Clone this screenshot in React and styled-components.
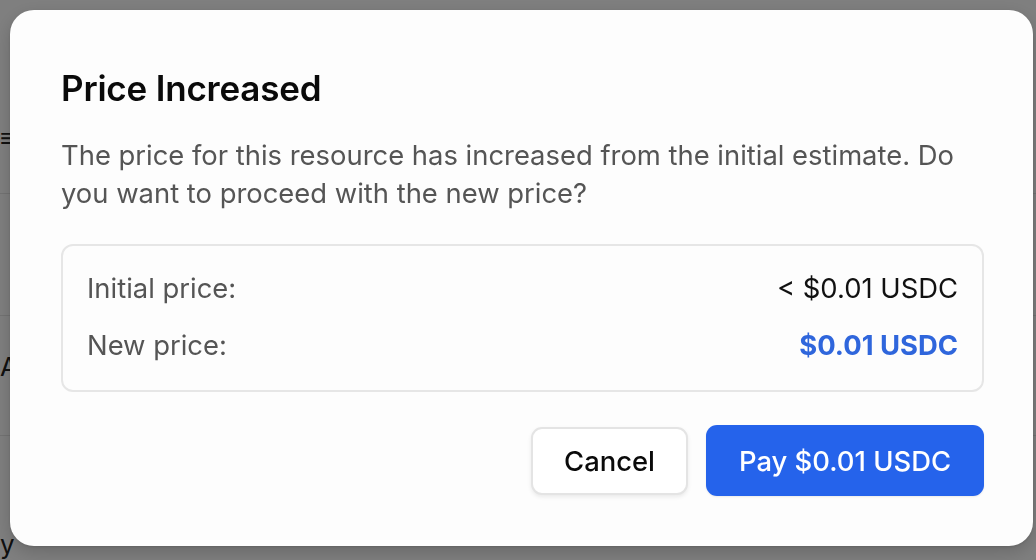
import React from "react";
import styled, { createGlobalStyle } from "styled-components";

const GlobalStyle = createGlobalStyle`
  html, body {
    margin: 0;
    padding: 0;
    background: #ffffff;
  }
  body {
    font-family: Inter, "Noto Sans", "Liberation Sans", sans-serif;
    -webkit-font-smoothing: antialiased;
  }
`;

const Page = styled.div`
  display: flex;
  flex-direction: column;
  height: 560px;
  overflow: hidden;
`;

const PageRow = styled.div`
  height: ${(props) => props.height}px;
  border-bottom: ${(props) => (props.last ? "none" : "1px solid #e6e6e6")};
  display: flex;
  align-items: flex-end;
  padding-bottom: ${(props) => props.pad || 0}px;
  font-size: 26px;
  line-height: 30px;
  color: #222;
  box-sizing: border-box;
`;

const Backdrop = styled.div`
  position: fixed;
  inset: 0;
  background: rgba(0, 0, 0, 0.5);
  padding: 10px 3px 0 10px;
  box-sizing: border-box;
`;

const Dialog = styled.div`
  background: #fdfdfd;
  border-radius: 24px;
  box-shadow: 0 6px 18px rgba(0, 0, 0, 0.18), 0 1px 3px rgba(0, 0, 0, 0.12);
  padding: 57px 49px 50px 51px;
  box-sizing: border-box;
  display: flex;
  flex-direction: column;
`;

const Title = styled.h2`
  margin: 0;
  font-size: 35px;
  line-height: 43px;
  font-weight: 600;
  color: #0a0a0a;
  letter-spacing: -0.2px;
`;

const Description = styled.p`
  margin: 26px 0 0;
  font-size: 27.4px;
  line-height: 38px;
  color: #555555;
`;

const PriceBox = styled.div`
  margin-top: 32px;
  border: 2px solid #e6e6e6;
  border-radius: 12px;
  padding: 23px 24px 25px 24px;
  display: flex;
  flex-direction: column;
  gap: 18px;
`;

const PriceRow = styled.div`
  display: flex;
  justify-content: space-between;
  align-items: center;
  font-size: 27.4px;
  line-height: 39px;
`;

const Label = styled.span`
  color: #555555;
`;

const Value = styled.span`
  color: ${(props) => (props.highlight ? "#2f66dc" : "#111111")};
  font-weight: ${(props) => (props.highlight ? 700 : 400)};
`;

const Actions = styled.div`
  margin-top: 33px;
  display: flex;
  justify-content: flex-end;
  align-items: center;
  gap: 18px;
`;

const Button = styled.button`
  font-family: inherit;
  font-size: 27.4px;
  font-weight: 500;
  height: ${(props) => (props.primary ? 71 : 68)}px;
  padding: 0 ${(props) => (props.primary ? 33 : 31)}px;
  border-radius: 11px;
  cursor: pointer;
  border: ${(props) => (props.primary ? "none" : "2px solid #e4e4e4")};
  background: ${(props) => (props.primary ? "#2563eb" : "#ffffff")};
  color: ${(props) => (props.primary ? "#ffffff" : "#0a0a0a")};
  box-shadow: ${(props) =>
    props.primary ? "0 1px 2px rgba(0,0,0,0.08)" : "0 2px 4px rgba(0,0,0,0.08)"};
`;

export default function App() {
  return (
    <>
      <GlobalStyle />
      <Page>
        <PageRow height={194} pad={40}>≡</PageRow>
        <PageRow height={122} />
        <PageRow height={120} pad={53}>AI</PageRow>
        <PageRow height={124} last>y</PageRow>
      </Page>
      <Backdrop>
        <Dialog role="dialog" aria-modal="true">
          <Title>Price Increased</Title>
          <Description>
            The price for this resource has increased from the initial estimate.
            Do you want to proceed with the new price?
          </Description>
          <PriceBox>
            <PriceRow>
              <Label>Initial price:</Label>
              <Value>&lt; $0.01 USDC</Value>
            </PriceRow>
            <PriceRow>
              <Label>New price:</Label>
              <Value highlight>$0.01 USDC</Value>
            </PriceRow>
          </PriceBox>
          <Actions>
            <Button>Cancel</Button>
            <Button primary>Pay $0.01 USDC</Button>
          </Actions>
        </Dialog>
      </Backdrop>
    </>
  );
}
